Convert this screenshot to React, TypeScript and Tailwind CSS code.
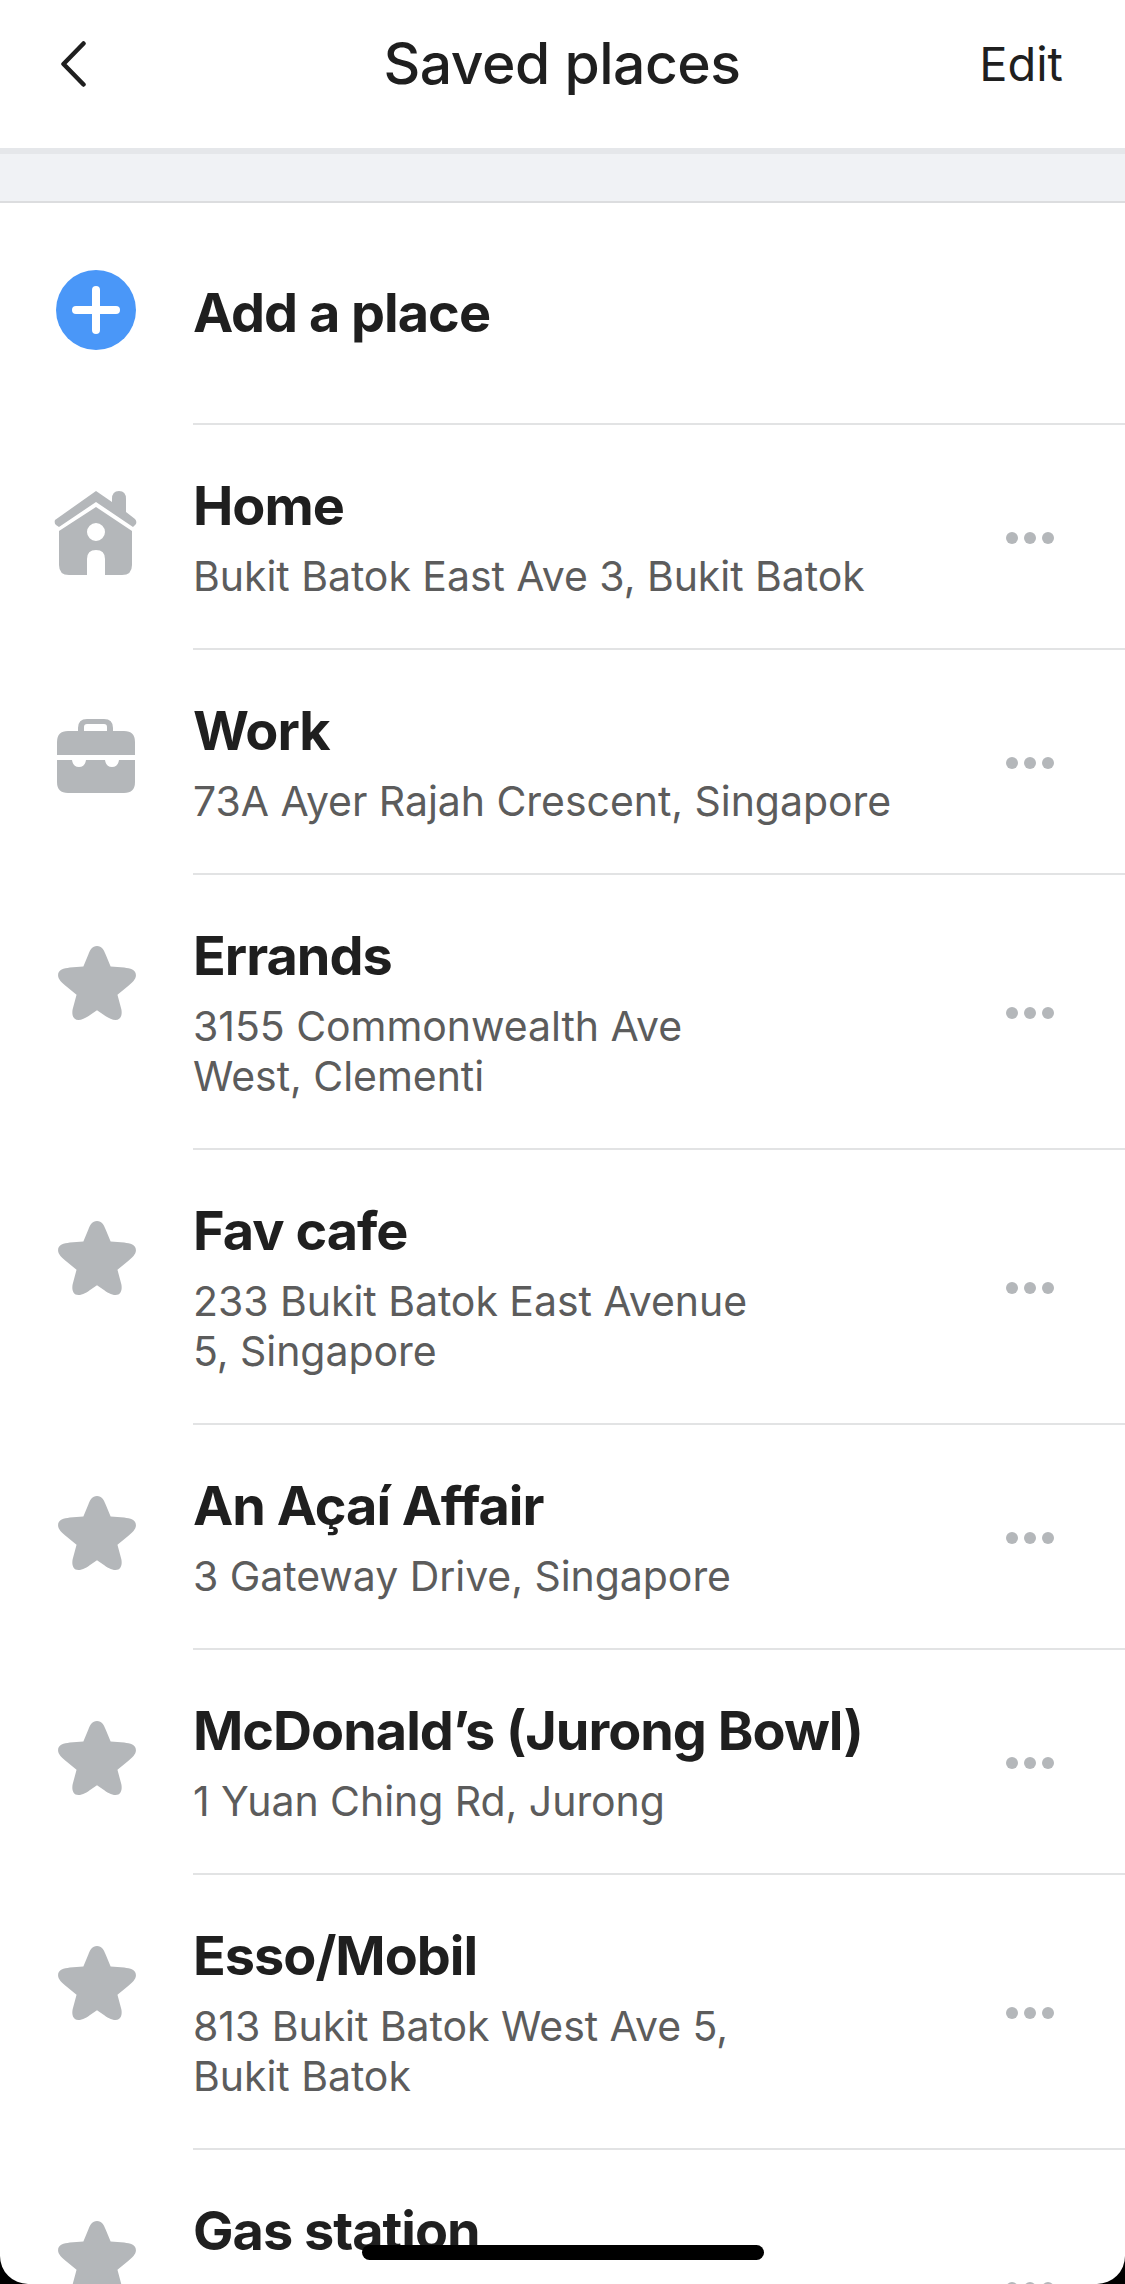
const FONT = "font-['Inter','Liberation_Sans',sans-serif]";

type Place = {
    name: string;
    lines: string[];
    icon: "home" | "work" | "star";
};

const PLACES: Place[] = [
    { name: "Home", lines: ["Bukit Batok East Ave 3, Bukit Batok"], icon: "home" },
    { name: "Work", lines: ["73A Ayer Rajah Crescent, Singapore"], icon: "work" },
    { name: "Errands", lines: ["3155 Commonwealth Ave", "West, Clementi"], icon: "star" },
    { name: "Fav cafe", lines: ["233 Bukit Batok East Avenue", "5, Singapore"], icon: "star" },
    { name: "An Açaí Affair", lines: ["3 Gateway Drive, Singapore"], icon: "star" },
    { name: "McDonald’s (Jurong Bowl)", lines: ["1 Yuan Ching Rd, Jurong"], icon: "star" },
    { name: "Esso/Mobil", lines: ["813 Bukit Batok West Ave 5,", "Bukit Batok"], icon: "star" },
    // address of this one is below the fold
    { name: "Gas station", lines: [], icon: "star" },
];

function HomeIcon() {
    return (
        <svg width="83" height="84" viewBox="0 0 83 84" fill="#b4b7ba">
            <path d="M42 0 L58 11 L58 8 Q58 0 65 0 Q72 0 72 8 L72 21 L81 28 Q83 30 82 33 L79 36 L42 11 L5 36 L2 34 Q0 32 1 29 Z" />
            <path
                fillRule="evenodd"
                d="M42 16 L78 40 L78 74 Q78 84 68 84 L51 84 L51 68 Q51 59 42 59 Q33 59 33 68 L33 84 L15 84 Q5 84 5 74 L5 40 Z M42 32 A9 9 0 1 0 42 50 A9 9 0 1 0 42 32 Z"
            />
        </svg>
    );
}

function WorkIcon() {
    return (
        <svg width="78" height="74" viewBox="0 0 78 74" fill="#b4b7ba">
            <path
                fillRule="evenodd"
                d="M21 12 L21 9 Q21 0 30 0 L47 0 Q56 0 56 9 L56 12 L67 12 Q78 12 78 23 L78 36 L0 36 L0 23 Q0 12 11 12 Z M27 12 L50 12 L50 8 Q50 5 47 5 L30 5 Q27 5 27 8 Z"
            />
            <path d="M0 41 L15 41 Q16 48 22 48 Q28 48 29 41 L48 41 Q49 48 55 48 Q61 48 62 41 L78 41 L78 63 Q78 74 67 74 L11 74 Q0 74 0 63 Z" />
        </svg>
    );
}

function StarIcon() {
    return (
        <svg width="78" height="74" viewBox="0 0 80 76" fill="#b4b7ba">
            <path d="M40 0 C45 0 47 4 49 9 L54 21 L68 22 C74 23 80 24 80 30 C80 34 76 38 72 41 L61 50 L65 65 C66 70 65 76 59 76 C55 76 50 73 46 70 L40 66 L34 70 C30 73 25 76 21 76 C15 76 14 70 15 65 L19 50 L8 41 C4 38 0 34 0 30 C0 24 6 23 12 22 L26 21 L31 9 C33 4 35 0 40 0 Z" />
        </svg>
    );
}

function PlaceIcon({ icon }: { icon: Place["icon"] }) {
    if (icon === "home") return <div className="pt-[66px] pr-[2px]"><HomeIcon /></div>;
    if (icon === "work") return <div className="pt-[69px]"><WorkIcon /></div>;
    return <div className="pt-[71px] pl-[2px]"><StarIcon /></div>;
}

function Row({ place }: { place: Place }) {
    return (
        <div className={place.lines.length === 0 ? "flex min-h-[275px]" : "flex"}>
            <div className="w-[193px] shrink-0 flex justify-center pr-[1px]">
                <PlaceIcon icon={place.icon} />
            </div>
            <div className="flex-1 flex items-center border-b-2 border-[#e2e3e4]">
                <div className="flex-1 self-start pt-[48px] pb-[46px]">
                    <div className="text-[54px] leading-[66px] font-bold tracking-[-1px] text-[#1f1f1f]">{place.name}</div>
                    {place.lines.length > 0 && (
                        <div className="mt-[12px] mb-[1px] text-[41px] leading-[50px] text-[#5c5c5c] tracking-[-0.05px]">
                            {place.lines.map(line => (
                                <div key={line}>{line}</div>
                            ))}
                        </div>
                    )}
                </div>
                <div className="flex gap-[6px] mr-[71px] mt-[2px]">
                    <span className="w-[12px] h-[12px] rounded-full bg-[#b4b7ba]" />
                    <span className="w-[12px] h-[12px] rounded-full bg-[#b4b7ba]" />
                    <span className="w-[12px] h-[12px] rounded-full bg-[#b4b7ba]" />
                </div>
            </div>
        </div>
    );
}

export default function App() {
    return (
        <div className={`relative w-[1125px] h-[2284px] overflow-hidden bg-black ${FONT}`}>
            <div className="h-full overflow-hidden rounded-b-[28px] bg-white">
                <div className="h-[148px] grid grid-cols-[1fr_auto_1fr] items-center bg-white pl-[61px] pr-[62px] pb-[20px]">
                    <svg width="25" height="46" viewBox="0 0 25 46" fill="none" stroke="#1f1f1f" strokeWidth="4.5" strokeLinecap="round" strokeLinejoin="round">
                        <path d="M22.5 2.5 L2.5 23 L22.5 43.5" />
                    </svg>
                    <span className="text-[57px] leading-[70px] font-medium text-[#1f1f1f] tracking-[-0.5px]">Saved places</span>
                    <span className="text-right text-[47px] leading-[60px] text-[#1f1f1f]">Edit</span>
                </div>
                <div className="h-[55px] bg-[#f0f2f5] border-t-[6px] border-b-2 border-t-[#e5e7ea] border-b-[#dcdddf]" />
                <div className="flex h-[222px]">
                    <div className="w-[193px] shrink-0 flex justify-center pt-[67px] pr-[1px]">
                        <div className="relative w-[80px] h-[80px] rounded-full bg-[#4a97f8]">
                            <span className="absolute left-[16px] top-[36px] w-[48px] h-[8px] rounded-full bg-white" />
                            <span className="absolute left-[36px] top-[16px] w-[8px] h-[48px] rounded-full bg-white" />
                        </div>
                    </div>
                    <div className="flex-1 border-b-2 border-[#e2e3e4] pt-[77px]">
                        <span className="text-[54px] leading-[66px] font-bold tracking-[-1px] text-[#1f1f1f]">Add a place</span>
                    </div>
                </div>
                {PLACES.map(place => (
                    <Row key={place.name} place={place} />
                ))}
            </div>
            <div className="absolute left-[362px] top-[2245px] w-[402px] h-[15px] rounded-full bg-black" />
        </div>
    );
}
